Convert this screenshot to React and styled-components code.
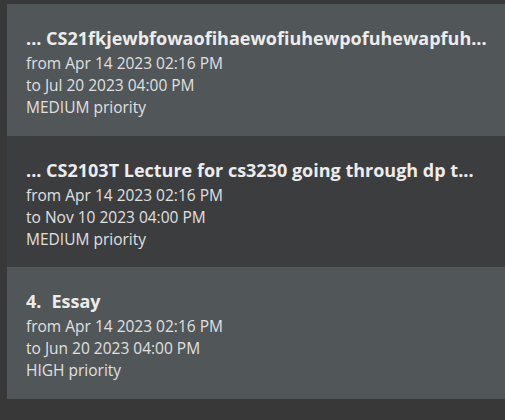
import styled, { createGlobalStyle } from "styled-components";

const GlobalStyle = createGlobalStyle`
  html, body {
    margin: 0;
    padding: 0;
    background: #383838;
  }
  body {
    font-family: "Open Sans", "Noto Sans", sans-serif;
  }
`;

const Page = styled.div`
  width: 505px;
  height: 420px;
  overflow: hidden;
  background: #383838;
  padding: 4px 0 0 7px;
  box-sizing: border-box;
`;

const TaskList = styled.div`
  display: flex;
  flex-direction: column;
`;

const TaskCard = styled.div`
  height: ${(p) => p.$h}px;
  background: ${(p) => (p.$odd ? "#3c3d3f" : "#515658")};
  padding: 21px 14px 0 19px;
  box-sizing: border-box;
`;

const Title = styled.div`
  font-size: 18px;
  font-weight: 700;
  line-height: 26px;
  color: #ececec;
  white-space: nowrap;
  overflow: hidden;
`;

const Index = styled.span`
  margin-right: 10px;
`;

const Details = styled.div`
  margin-top: 1px;
  display: flex;
  flex-direction: column;
`;

const Line = styled.div`
  font-size: 15.5px;
  line-height: 22px;
  color: #e0e0e0;
  white-space: nowrap;
`;

const tasks = [
  {
    title: "... CS21fkjewbfowaofihaewofiuhewpofuhewapfuh...",
    from: "Apr 14 2023 02:16 PM",
    to: "Jul 20 2023 04:00 PM",
    priority: "MEDIUM",
    h: 132,
  },
  {
    title: "... CS2103T Lecture for cs3230 going through dp t...",
    from: "Apr 14 2023 02:16 PM",
    to: "Nov 10 2023 04:00 PM",
    priority: "MEDIUM",
    h: 131,
  },
  {
    index: "4.",
    title: "Essay",
    from: "Apr 14 2023 02:16 PM",
    to: "Jun 20 2023 04:00 PM",
    priority: "HIGH",
    h: 132,
  },
];

export default function App() {
  return (
    <>
      <GlobalStyle />
      <Page>
        <TaskList>
          {tasks.map((t, i) => (
            <TaskCard key={i} $odd={i % 2 === 1} $h={t.h}>
              <Title>
                {t.index && <Index>{t.index}</Index>}
                {t.title}
              </Title>
              <Details>
                <Line>from {t.from}</Line>
                <Line>to {t.to}</Line>
                <Line>{t.priority} priority</Line>
              </Details>
            </TaskCard>
          ))}
        </TaskList>
      </Page>
    </>
  );
}
